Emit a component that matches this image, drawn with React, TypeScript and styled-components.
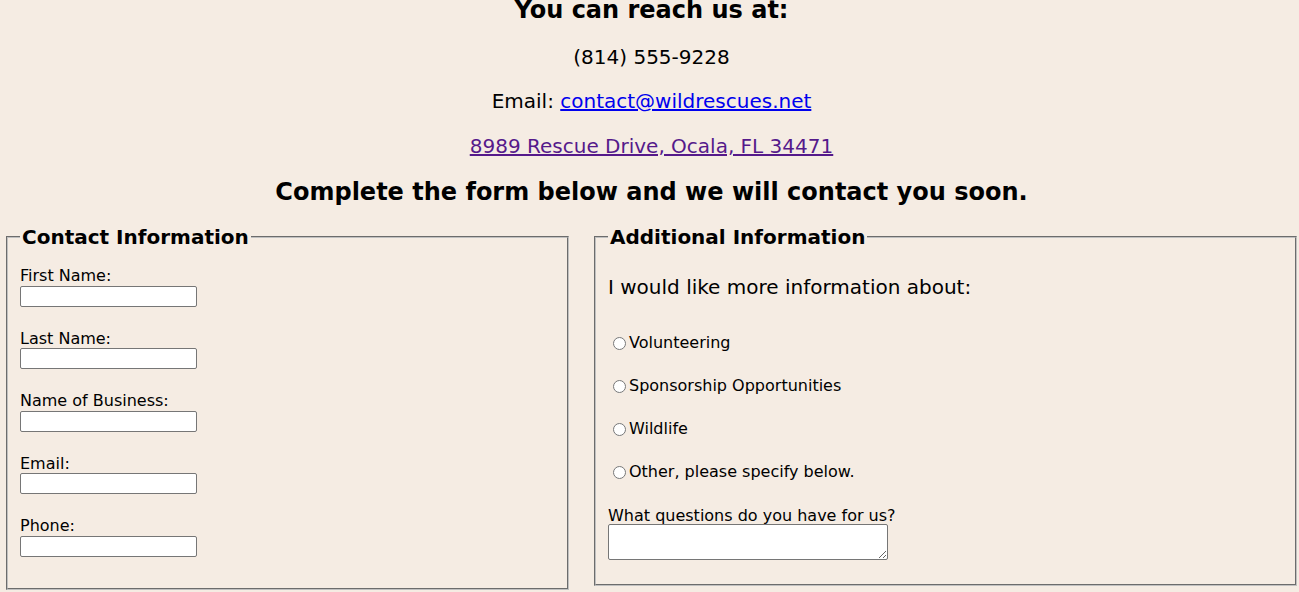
import React from 'react'
import styled, {createGlobalStyle} from 'styled-components'

const GlobalStyle = createGlobalStyle`
  body {
    margin: 0;
    background: #f5ece3;
    color: #000;
    font-family: Verdana, 'DejaVu Sans', sans-serif;
    font-size: 16px;
    line-height: 1.215;
  }
`

const Page = styled.main`
  padding: 0 2px 0 6px;
`

const ContactBlock = styled.section`
  text-align: center;
`

const Heading = styled.h2<{$first?: boolean}>`
  font-size: 24px;
  font-weight: bold;
  line-height: 1.215;
  margin: ${(p) => (p.$first ? '-4px' : '20px')} 0 20px;
`

const ContactLine = styled.p`
  font-size: 20px;
  margin: 20px 0;
`

const Link = styled.a<{$visited?: boolean}>`
  color: ${(p) => (p.$visited ? '#551a8b' : '#0000ee')};
  text-decoration: underline;
`

const FormRow = styled.form`
  display: flex;
  align-items: flex-start;
  gap: 25px;
  margin-top: -2px;
`

const Fieldset = styled.fieldset<{$width: number}>`
  width: ${(p) => p.$width}px;
  box-sizing: border-box;
  margin: 0;
  padding: 5.6px 12px 10px;
  border: 2px groove rgb(192, 192, 192);
`

const Legend = styled.legend`
  font-size: 20px;
  font-weight: bold;
  padding: 0 2px;
`

const FieldList = styled.div`
  display: flex;
  flex-direction: column;
  gap: 22.1px;
  padding: 11px 0 21px;
`

const Field = styled.div`
  display: flex;
  flex-direction: column;
  align-items: flex-start;
`

const Label = styled.label`
  font-size: 16px;
`

const TextInput = styled.input`
  width: 177px;
  height: 21px;
  box-sizing: border-box;
  margin: 0;
  padding: 1px 2px;
  border: 1px solid #767676;
  border-radius: 2px;
  background: #fff;
`

const Intro = styled.p`
  font-size: 20px;
  margin: 20px 0 34px;
`

const OptionList = styled.div`
  display: flex;
  flex-direction: column;
  gap: 23.6px;
  padding-bottom: 14px;
`

const Option = styled.label`
  display: flex;
  align-items: center;
  font-size: 16px;
`

const Radio = styled.input`
  width: 13px;
  height: 13px;
  margin: 0 3px 0 5px;
`

const Question = styled.div`
  display: flex;
  flex-direction: column;
  align-items: flex-start;
`

const TextArea = styled.textarea`
  width: 280px;
  height: 36px;
  box-sizing: border-box;
  margin: -1px 0 0;
  border: 1px solid #767676;
  border-radius: 2px;
  background: #fff;
`

const contactFields = ['First Name:', 'Last Name:', 'Name of Business:', 'Email:', 'Phone:']
const topics = ['Volunteering', 'Sponsorship Opportunities', 'Wildlife', 'Other, please specify below.']

export default function App() {
  return (
    <>
      <GlobalStyle />
      <Page>
        <ContactBlock>
          <Heading $first>You can reach us at:</Heading>
          <ContactLine>(814) 555-9228</ContactLine>
          <ContactLine>
            Email: <Link href="#">contact@wildrescues.net</Link>
          </ContactLine>
          <ContactLine>
            <Link href="#" $visited>
              8989 Rescue Drive, Ocala, FL 34471
            </Link>
          </ContactLine>
          <Heading>Complete the form below and we will contact you soon.</Heading>
        </ContactBlock>

        <FormRow onSubmit={(e) => e.preventDefault()}>
          <Fieldset $width={563}>
            <Legend>Contact Information</Legend>
            <FieldList>
              {contactFields.map((label, i) => (
                <Field key={label}>
                  <Label htmlFor={`field-${i}`}>{label}</Label>
                  <TextInput id={`field-${i}`} type="text" />
                </Field>
              ))}
            </FieldList>
          </Fieldset>

          <Fieldset $width={703}>
            <Legend>Additional Information</Legend>
            <Intro>I would like more information about:</Intro>
            <OptionList>
              {topics.map((topic) => (
                <Option key={topic}>
                  <Radio type="radio" name="topic" value={topic} />
                  {topic}
                </Option>
              ))}
              <Question>
                <Label htmlFor="questions">What questions do you have for us?</Label>
                <TextArea id="questions" />
              </Question>
            </OptionList>
          </Fieldset>
        </FormRow>
      </Page>
    </>
  )
}
